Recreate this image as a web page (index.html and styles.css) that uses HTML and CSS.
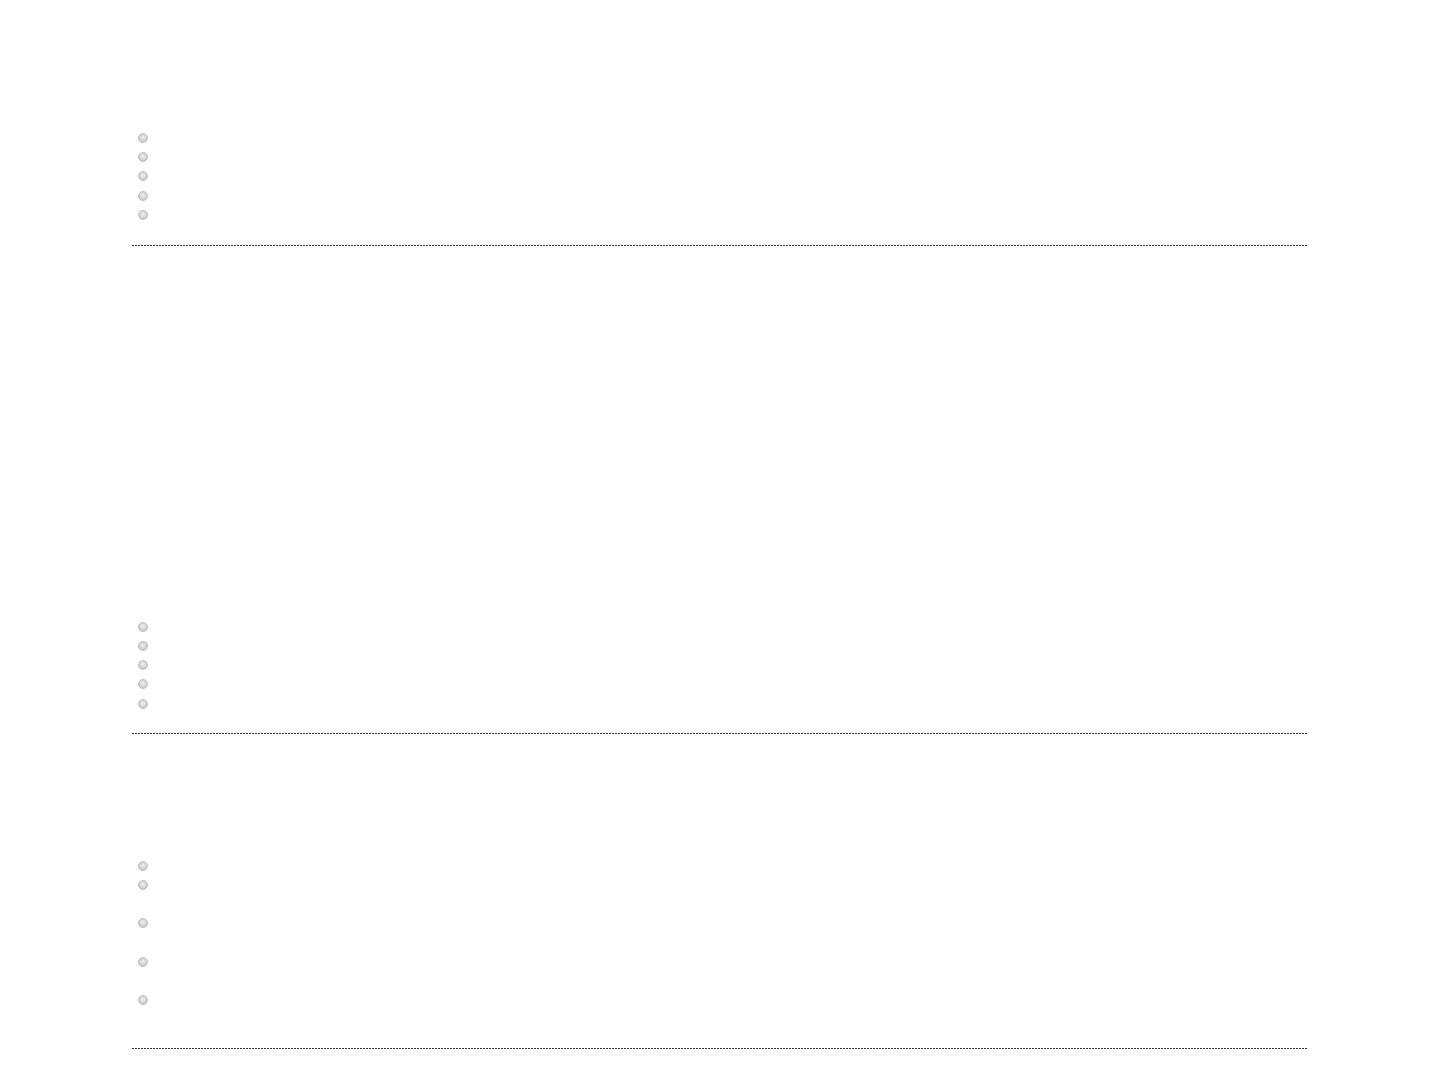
FILE: index.html
```html
<!DOCTYPE html>
<html lang="en">
<head>
<meta charset="utf-8">
<title>Lists</title>
<link rel="stylesheet" href="styles.css">
</head>
<body>
<div class="page">
  <section class="block block-first">
    <ul class="list">
      <li class="item"></li>
      <li class="item"></li>
      <li class="item"></li>
      <li class="item"></li>
      <li class="item"></li>
    </ul>
    <div class="divider"></div>
  </section>
  <section class="block block-second">
    <ul class="list">
      <li class="item"></li>
      <li class="item"></li>
      <li class="item"></li>
      <li class="item"></li>
      <li class="item"></li>
    </ul>
    <div class="divider"></div>
  </section>
  <section class="block block-third">
    <ul class="list">
      <li class="item"></li>
      <li class="item item-tall"></li>
      <li class="item item-tall"></li>
      <li class="item item-tall"></li>
      <li class="item item-tall"></li>
    </ul>
    <div class="divider"></div>
  </section>
</div>
</body>
</html>
```

FILE: styles.css
```css
html, body {
  margin: 0;
  padding: 0;
  background: #ffffff;
  font-family: "Liberation Sans", Arial, sans-serif;
  font-size: 13px;
  color: #ffffff;
}

.page {
  width: 1176px;
  margin: 0 auto;
  padding-top: 128.4px;
}

.block {
  display: flex;
  flex-direction: column;
}

.block-second {
  margin-top: 371px;
}

.block-second .divider {
  margin-top: 19.35px;
}

.block-third {
  margin-top: 122.5px;
}

.block-third .divider {
  margin-top: 18.85px;
}

.list {
  list-style: none;
  margin: 0;
  padding: 0;
}

.item {
  display: flex;
  align-items: flex-start;
  height: 19.25px;
}

.item-tall {
  height: 38.5px;
}

.item::before {
  content: "";
  display: block;
  box-sizing: border-box;
  width: 10px;
  height: 10px;
  margin-top: 4.6px;
  margin-left: 6px;
  border-radius: 50%;
  border: 1px solid #bdbdbd;
  background: radial-gradient(circle at 50% 40%, #f0f0f0 0, #d8d8d8 45%, #bcbcbc 100%);
}

.divider {
  margin-top: 20.35px;
  height: 1px;
  background: repeating-linear-gradient(90deg, #333333 0 2px, transparent 2px 3px);
}
```
